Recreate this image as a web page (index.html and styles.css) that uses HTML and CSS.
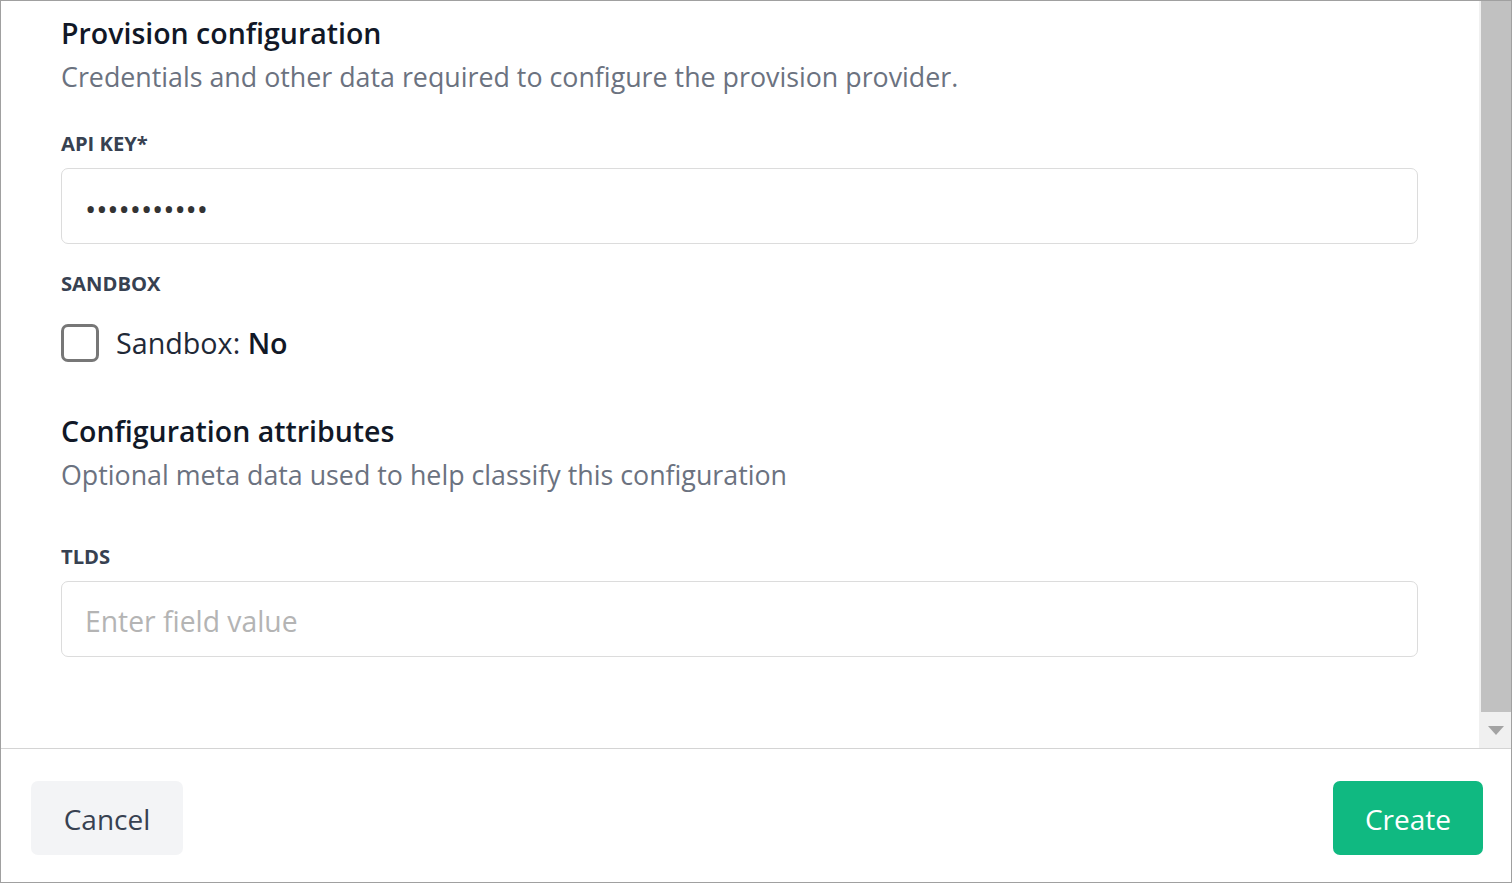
FILE: index.html
```html
<!DOCTYPE html>
<html lang="en">
<head>
<meta charset="utf-8">
<title>Provision configuration</title>
<link rel="stylesheet" href="styles.css">
</head>
<body>
<div class="frame">
  <div class="scroll-area">
    <div class="content">
      <h2 class="section-title">Provision configuration</h2>
      <p class="section-desc">Credentials and other data required to configure the provision provider.</p>

      <div class="field field-first">
        <label class="field-label" for="apikey">API KEY*</label>
        <input class="text-input password" id="apikey" type="password" value="abcdefghijk">
      </div>

      <div class="field">
        <div class="field-label">SANDBOX</div>
        <label class="check-row">
          <span class="checkbox"></span>
          <span class="check-text">Sandbox: <strong>No</strong></span>
        </label>
      </div>

      <h2 class="section-title section-second">Configuration attributes</h2>
      <p class="section-desc desc-second">Optional meta data used to help classify this configuration</p>

      <div class="field field-first field-tlds">
        <label class="field-label" for="tlds">TLDS</label>
        <input class="text-input" id="tlds" type="text" placeholder="Enter field value">
      </div>
    </div>
    <div class="scrollbar">
      <div class="thumb"></div>
      <div class="arrow"><span class="tri"></span></div>
    </div>
  </div>
  <div class="footer">
    <button class="btn btn-cancel" type="button">Cancel</button>
    <button class="btn btn-create" type="button">Create</button>
  </div>
</div>
</body>
</html>
```

FILE: styles.css
```css
* { box-sizing: border-box; }

html, body {
  margin: 0;
  padding: 0;
  background: #ffffff;
}

body {
  font-family: "Open Sans", "Noto Sans", sans-serif;
  width: 1512px;
  height: 883px;
  overflow: hidden;
}

.frame {
  width: 1512px;
  height: 883px;
  border: 1px solid #a0a0a0;
  display: flex;
  flex-direction: column;
  background: #fff;
}

.scroll-area {
  flex: 1;
  display: flex;
  min-height: 0;
}

.content {
  flex: 1;
  padding: 15px 61px 0 60px;
  overflow: hidden;
}

.section-title {
  margin: 0;
  font-size: 28.5px;
  line-height: 35px;
  font-weight: 600;
  color: #111827;
}

.section-desc {
  margin: 9px 0 0 0;
  font-size: 26.8px;
  line-height: 34px;
  color: #6b7280;
}

.section-second { margin-top: 52px; }
.desc-second { margin-top: 9px; }

.field { margin-top: 26px; }
.field-first { margin-top: 36px; }
.field-tlds { margin-top: 51px; }

.field-label {
  display: block;
  font-size: 20.2px;
  line-height: 26px;
  font-weight: 700;
  color: #374151;
  margin-bottom: 12px;
}

.text-input {
  display: block;
  width: 100%;
  height: 76px;
  border: 1px solid #dcdcdc;
  border-radius: 7px;
  padding: 3px 23px 0 23px;
  font-family: "Open Sans", "Noto Sans", sans-serif;
  font-size: 28.3px;
  color: #1f2937;
  background: #fff;
  outline: none;
}

.text-input::placeholder { color: #b4b4b4; }

.password {
  font-size: 30px;
  letter-spacing: -0.1px;
  color: #333;
  padding-top: 5px;
}

.check-row {
  display: flex;
  align-items: center;
  gap: 17px;
  margin-top: 27px;
}

.checkbox {
  width: 38px;
  height: 38px;
  border: 3px solid #777777;
  border-radius: 7px;
  background: #fff;
  flex: none;
}

.check-text {
  font-size: 28.7px;
  line-height: 38px;
  color: #1f2937;
  padding-top: 1px;
}

.check-text strong {
  font-weight: 600;
  color: #111827;
}

.scrollbar {
  width: 32px;
  flex: none;
  background: #f0f0f0;
  display: flex;
  flex-direction: column;
}

.thumb {
  flex: 1;
  margin-left: 2px;
  background: #c1c1c1;
}

.arrow {
  height: 36px;
  display: flex;
  align-items: center;
  justify-content: center;
  padding-left: 2px;
}

.tri {
  width: 0;
  height: 0;
  border-left: 8px solid transparent;
  border-right: 8px solid transparent;
  border-top: 9px solid #a3a3a3;
}

.footer {
  flex: none;
  height: 134px;
  border-top: 1px solid #d4d4d4;
  display: flex;
  justify-content: space-between;
  align-items: flex-start;
  padding: 32px 28px 0 30px;
}

.btn {
  height: 74px;
  border: none;
  border-radius: 7px;
  font-family: "Open Sans", "Noto Sans", sans-serif;
  font-size: 28px;
  padding: 2px 0 0 0;
  cursor: pointer;
}

.btn-cancel {
  width: 152px;
  background: #f3f4f6;
  color: #374151;
}

.btn-create {
  width: 150px;
  background: #10b981;
  color: #ffffff;
}
```
